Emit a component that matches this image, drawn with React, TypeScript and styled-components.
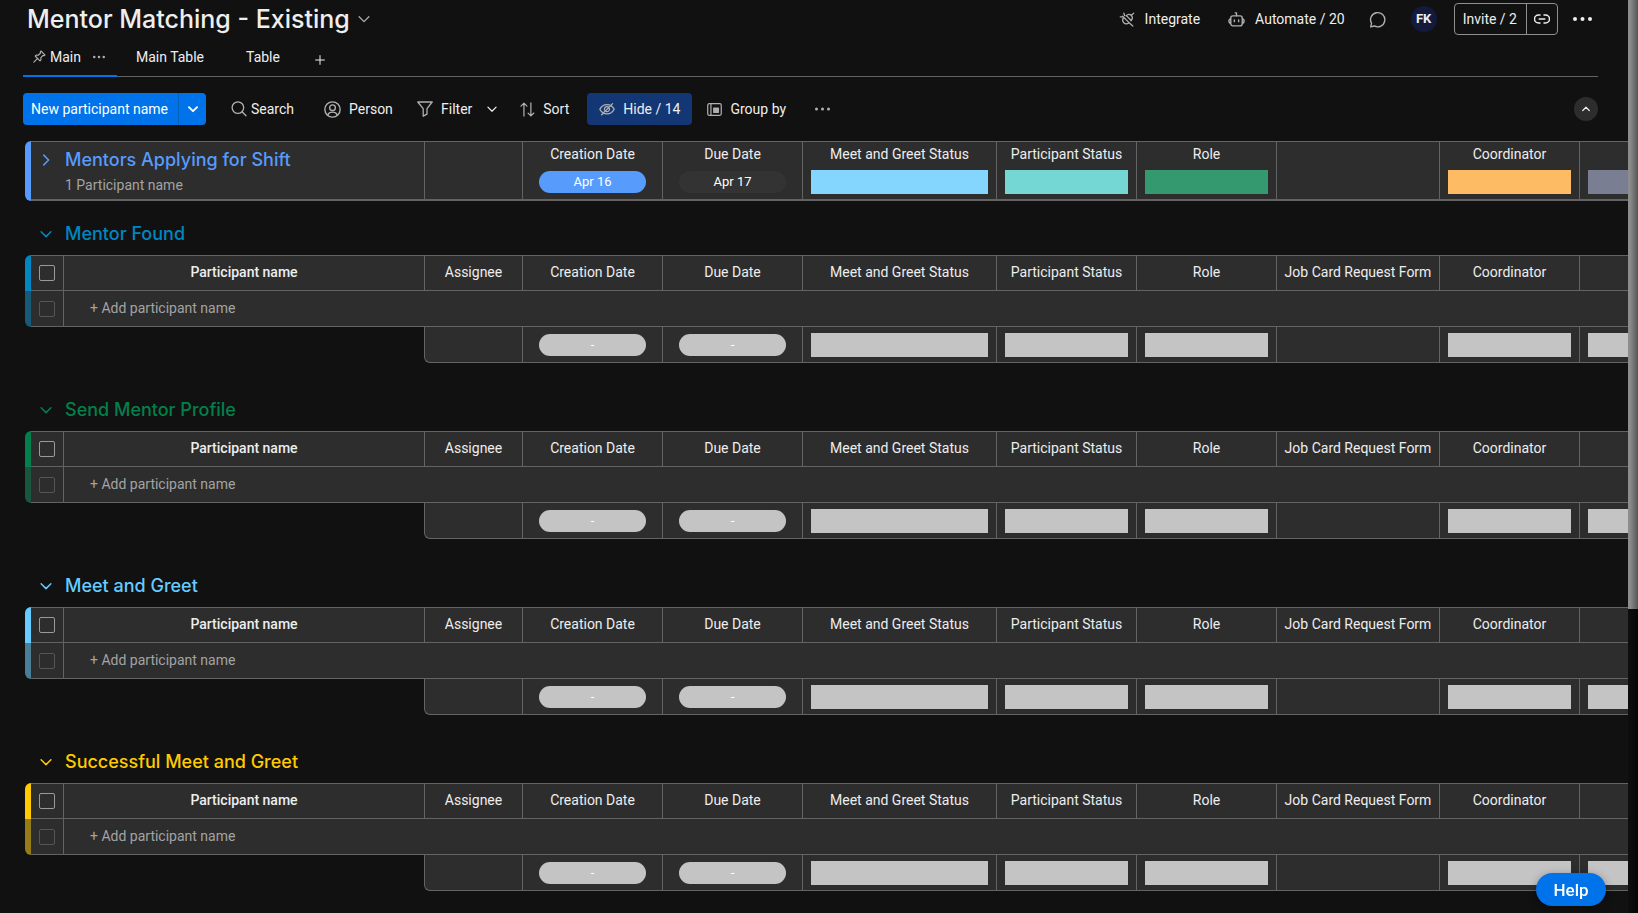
import React from 'react';
import styled, { createGlobalStyle } from 'styled-components';

const line = '#636363';
const surface = '#2d2d2d';
const textColor = '#eeeeee';
const muted = '#a3a3a3';
const iconColor = '#b0b0b0';
const blue = '#0073ea';
const headingFont = 'Inter, "Liberation Sans", sans-serif';

const GlobalStyle = createGlobalStyle`
  *, *::before, *::after { box-sizing: border-box; }
  body {
    margin: 0;
    background: #111111;
    color: ${textColor};
    font: 400 14px/20px Roboto, "Liberation Sans", sans-serif;
  }
  button {
    font: inherit;
    color: inherit;
    background: none;
    border: 0;
    padding: 0;
    cursor: pointer;
  }
  svg { display: block; flex: none; }
`;

/* ---------- shell ---------- */

const Shell = styled.div`
  display: flex;
  height: 100vh;
  overflow: hidden;
`;

const Board = styled.main`
  flex: 1;
  min-width: 0;
  overflow: hidden;
`;

const ScrollTrack = styled.div`
  flex: none;
  width: 10px;
  background: linear-gradient(90deg, #0e0e0e, #060606);
`;

const ScrollThumb = styled.div`
  height: 66.7%;
  background: linear-gradient(90deg, #8c8c8c 20%, #565656);
`;

/* ---------- header ---------- */

const Header = styled.header`
  display: flex;
  align-items: center;
  justify-content: space-between;
  height: 38px;
  padding: 0 30px 0 27px;
`;

const TitleButton = styled.button`
  display: flex;
  align-items: center;
  gap: 8px;
`;

const Title = styled.h1`
  margin: 0;
  font: 500 25px/32px ${headingFont};
`;

const Actions = styled.div`
  display: flex;
  align-items: center;
`;

const HeaderAction = styled.button<{ $after: number }>`
  display: flex;
  align-items: center;
  gap: 10px;
  margin-right: ${(p) => p.$after}px;
`;

const Avatar = styled.button`
  width: 26px;
  height: 26px;
  margin-right: 17px;
  border-radius: 50%;
  background: #141a3c;
  font-size: 13px;
  font-weight: 700;
`;

const InviteGroup = styled.div`
  display: flex;
  height: 32px;
  margin-right: 8px;
  border: 1px solid #8f8f8f;
  border-radius: 4px;
`;

const InviteButton = styled.button`
  padding: 0 9px 0 8px;
`;

const LinkButton = styled.button`
  padding: 0 7px;
  border-left: 1px solid #8f8f8f;
`;

const MoreButton = styled.button`
  display: grid;
  place-items: center;
  width: 32px;
  height: 32px;
`;

/* ---------- tabs ---------- */

const Tabs = styled.nav`
  display: flex;
  height: 39px;
  margin: 0 30px 0 23px;
  border-bottom: 1px solid ${line};
`;

const Tab = styled.button<{ $active?: boolean }>`
  display: flex;
  align-items: center;
  margin-bottom: -1px;
  padding: 0 ${(p) => (p.$active ? '12px 0 10px' : '23px 0 19px')};
  border-bottom: 2px solid ${(p) => (p.$active ? blue : 'transparent')};
`;

const TabLabel = styled.span`
  margin: 0 12px 0 4px;
`;

const AddTab = styled.button`
  display: grid;
  place-items: center;
  width: 34px;
  padding-top: 5px;
`;

/* ---------- toolbar ---------- */

const Toolbar = styled.div`
  display: flex;
  align-items: center;
  height: 64px;
  padding: 0 30px 0 23px;
`;

const NewItem = styled.div`
  display: flex;
  height: 32px;
  margin-right: 13px;
  border-radius: 4px;
  background: ${blue};
  color: #ffffff;
`;

const NewItemButton = styled.button`
  padding: 0 10px 0 8px;
  font-size: 14px;
`;

const NewItemMenu = styled.button`
  display: grid;
  place-items: center;
  width: 28px;
  border-left: 1px solid #0060b9;
`;

const ToolButton = styled.button<{ $width: number; $active?: boolean; $tight?: boolean }>`
  display: flex;
  align-items: center;
  gap: ${(p) => (p.$tight ? 4 : 8)}px;
  min-width: ${(p) => p.$width}px;
  height: 32px;
  padding: 0 12px;
  margin-right: ${(p) => (p.$active ? 3 : 0)}px;
  border-radius: 4px;
  background: ${(p) => (p.$active ? '#133774' : 'transparent')};
`;

const FilterMenu = styled.button`
  display: grid;
  place-items: center;
  width: 16px;
  height: 32px;
  margin-right: 8px;
`;

const CollapseButton = styled.button`
  display: grid;
  place-items: center;
  width: 24px;
  height: 24px;
  margin-left: auto;
  border-radius: 50%;
  background: ${surface};
`;

/* ---------- groups ---------- */

const Groups = styled.div`
  padding-left: 25px;
  overflow: hidden;
`;

const Group = styled.section`
  margin-bottom: 14px;
`;

const GroupHeading = styled.h2<{ $color: string }>`
  height: 54px;
  margin: 0;
  padding-top: 21px;
  color: ${(p) => p.$color};
  font: 500 18px/24px ${headingFont};
`;

const GroupToggle = styled.button<{ $inset?: boolean }>`
  display: flex;
  align-items: center;
  gap: 13px;
  padding-left: ${(p) => (p.$inset ? 9 : 15)}px;
`;

const GroupTable = styled.table`
  width: 100%;
  min-width: 1694px;
  table-layout: fixed;
  border-spacing: 0;
`;

const Cell = styled.td<{ $first?: boolean }>`
  height: 36px;
  padding: 0;
  background: ${surface};
  border-bottom: 1px solid ${line};
  border-left: ${(p) => (p.$first ? 0 : 1)}px solid ${line};
`;

const HeadCell = styled(Cell).attrs({ as: 'th', scope: 'col' })`
  padding: 0 4px 2px;
  border-top: 1px solid ${line};
  font-weight: 400;
  white-space: nowrap;
  overflow: hidden;
`;

const ItemHead = styled(HeadCell)`
  font-weight: 500;
`;

const CheckCell = styled(Cell)<{ $top?: boolean }>`
  border-top: ${(p) => (p.$top ? 1 : 0)}px solid ${line};
  padding-left: 8px;
`;

const Bar = styled.td<{ $color: string; $edge: 'top' | 'bottom' | 'both' }>`
  padding: 0;
  background: ${(p) => (p.$edge === 'bottom' ? `color-mix(in srgb, ${p.$color} 50%, ${surface})` : p.$color)};
  border-top-left-radius: ${(p) => (p.$edge === 'bottom' ? 0 : 6)}px;
  border-bottom-left-radius: ${(p) => (p.$edge === 'top' ? 0 : 6)}px;
`;

const Check = styled.input.attrs({ type: 'checkbox' })`
  appearance: none;
  display: block;
  width: 16px;
  height: 16px;
  margin: 0;
  border: 1px solid #9a9a9a;
  border-radius: 2px;

  &:disabled { border-color: #555555; }
`;

const AddItem = styled.input`
  display: block;
  width: 320px;
  height: 28px;
  margin-left: 22px;
  padding: 0 4px 2px;
  border: 0;
  background: transparent;
  color: ${textColor};
  font: inherit;

  &::placeholder { color: ${muted}; opacity: 1; }
`;

const Blank = styled.td`
  padding: 0;
`;

const SummaryCell = styled(Cell)<{ $corner?: boolean }>`
  padding: 1px 0 0;
  border-bottom-left-radius: ${(p) => (p.$corner ? 6 : 0)}px;
`;

const Slot = styled.div<{ $pad: number }>`
  display: flex;
  align-items: center;
  height: 24px;
  padding: 0 ${(p) => p.$pad}px;
`;

const Pill = styled.span<{ $color: string }>`
  flex: 1;
  height: 22px;
  border-radius: 11px;
  background: ${(p) => p.$color};
  color: #ffffff;
  font-size: 13px;
  line-height: 21px;
  text-align: center;
`;

const Battery = styled.span<{ $color: string }>`
  flex: 1;
  height: 24px;
  background: ${(p) => p.$color};
`;

const CollapsedCell = styled(Cell)`
  height: 60px;
  padding-top: 2px;
  border-top: 1px solid ${line};
  border-bottom: 2px solid ${line};
  vertical-align: top;
`;

const CollapsedTitle = styled.h2`
  margin: 4px 0 3px;
  color: #579bfc;
  font: 500 18px/24px ${headingFont};
`;

const CollapsedCount = styled.div`
  padding-left: 34px;
  color: ${muted};
`;

const ColumnLabel = styled.div`
  height: 20px;
  margin-bottom: 6px;
  text-align: center;
  white-space: nowrap;
`;

const HelpButton = styled.button`
  position: fixed;
  right: 32px;
  bottom: 7px;
  width: 70px;
  height: 33px;
  border-radius: 17px;
  background: ${blue};
  color: #ffffff;
  font-size: 17px;
  font-weight: 500;
  box-shadow: 0 2px 8px rgba(0, 0, 0, 0.35);
`;

/* ---------- icons ---------- */

type IconProps = { size?: number; color?: string; children: React.ReactNode; weight?: number };

const Icon = ({ size = 16, color = iconColor, weight = 1.3, children }: IconProps) => (
  <svg width={size} height={size} viewBox="0 0 16 16" fill="none" stroke={color}
    strokeWidth={weight} strokeLinecap="round" strokeLinejoin="round" aria-hidden="true">
    {children}
  </svg>
);

const Chevron = ({ size = 12, color = 'currentColor', weight = 1.6, dir = 'down' }:
  { size?: number; color?: string; weight?: number; dir?: 'down' | 'up' | 'right' }) => (
  <Icon size={size} color={color} weight={weight}>
    {dir === 'down' && <path d="M1.5 5 8 11.5 14.5 5" />}
    {dir === 'up' && <path d="M1.5 11 8 4.5 14.5 11" />}
    {dir === 'right' && <path d="M5 1.5 11.5 8 5 14.5" />}
  </Icon>
);

const Dots = ({ width = 16, r = 1.5, color = iconColor }) => (
  <svg width={width} height="6" viewBox={`0 0 ${width} 6`} fill={color} aria-hidden="true">
    <circle cx={r} cy="3" r={r} />
    <circle cx={width / 2} cy="3" r={r} />
    <circle cx={width - r} cy="3" r={r} />
  </svg>
);

const PinIcon = () => (
  <Icon size={13} weight={1.4}>
    <path d="M9.8 1.2 14.8 6.2 13.4 7 12 6.9 9.6 9.6 9.8 12.2 8.6 13.3 2.7 7.4 3.8 6.2 6.4 6.4 9.1 4 9 2.6ZM5.6 10.4 1 15" />
  </Icon>
);

const PlugIcon = () => (
  <Icon size={16} weight={1.3}>
    <path d="M3.6 5.200 11.300 12.900M4.600 6.600C3.200 8.500 3.400 10.300 4.800 11.700 6.200 13.100 8.200 13.100 10 11.700M1.300 5.900 4 5.600M4.900 2.200 5.600 4.600M7.100 4.800C8.900 3.100 10.900 3.100 12.300 4.500 13.700 5.900 13.700 7.900 12 9.700M7.300 4.600 12.200 9.500M12.300 4.500 14.700 2.100M10.400 12 13.800 15" />
  </Icon>
);

const RobotIcon = () => (
  <Icon size={17} weight={1.3}>
    <rect x="2.6" y="4.6" width="10.8" height="9.4" rx="2" />
    <path d="M8 4.4V1.8M6.8 1.8H8M2.4 7.4C.4 7.4.4 11.4 2.4 11.4M13.6 7.4C15.6 7.4 15.6 11.4 13.6 11.4M6 8.3V10M10 8.3V10" />
  </Icon>
);

const BubbleIcon = () => (
  <Icon size={17} weight={1.3}>
    <path d="M1.6 15 2.4 11.6A6.7 6.7 0 1 1 5 14.1Z" />
  </Icon>
);

const LinkIcon = () => (
  <Icon size={16} color={textColor} weight={1.5}>
    <path d="M6 4H4.5a4 4 0 0 0 0 8H6M10 4h1.5a4 4 0 0 1 0 8H10M5.2 8H10.8" />
  </Icon>
);

const SearchIcon = () => (
  <Icon size={16}>
    <circle cx="6.9" cy="6.6" r="5.8" />
    <path d="M11.1 10.8 15 14.8" />
  </Icon>
);

const PersonIcon = () => (
  <Icon size={17}>
    <circle cx="8" cy="8" r="7.2" />
    <circle cx="8" cy="6.3" r="2.7" />
    <path d="M3.6 13.2C4.3 11.3 5.8 10.5 8 10.5S11.7 11.3 12.4 13.2" />
  </Icon>
);

const FilterIcon = () => (
  <Icon size={16}>
    <path d="M.8 1H15.2L10 7.7V13.2L6.2 15.2V7.7Z" />
  </Icon>
);

const SortIcon = () => (
  <Icon size={15}>
    <path d="M4.2 15V1.2M1 4.4 4.2 1.2 7.4 4.4M11.6 1V14.8M8.6 11.8 11.6 14.8 14.8 11.8" />
  </Icon>
);

const HideIcon = () => (
  <Icon size={16}>
    <path d="M.8 8.3C2.4 5.3 5 3.6 8 3.6S13.6 5.3 15.2 8.3C13.6 11.2 11 12.9 8 12.9S2.4 11.2.8 8.3ZM2.6 13.8 13.6 2.6M6 9.8A2.5 2.5 0 0 1 9 5.9M10.3 7.3A2.5 2.5 0 0 1 7.3 10.6" />
  </Icon>
);

const GroupByIcon = () => (
  <Icon size={15}>
    <rect x=".8" y="1.8" width="14.4" height="12.4" rx="1.6" />
    <path d="M4.2 2V14" />
    <rect x="7.2" y="6.4" width="5" height="4.6" fill={iconColor} />
  </Icon>
);

const PlusIcon = () => (
  <Icon size={10} color={textColor} weight={1.6}>
    <path d="M8 1V15M1 8H15" />
  </Icon>
);

/* ---------- data ---------- */

type Column = { name: string; width?: number; kind: 'none' | 'date' | 'status'; color?: string; value?: string; hideLabel?: boolean };

const columns: Column[] = [
  { name: 'Assignee', width: 98, kind: 'none', hideLabel: true },
  { name: 'Creation Date', width: 140, kind: 'date', color: '#579bfc', value: 'Apr 16' },
  { name: 'Due Date', width: 140, kind: 'date', color: '#333333', value: 'Apr 17' },
  { name: 'Meet and Greet Status', width: 194, kind: 'status', color: '#85d6ff' },
  { name: 'Participant Status', width: 140, kind: 'status', color: '#74d7d3' },
  { name: 'Role', width: 140, kind: 'status', color: '#359970' },
  { name: 'Job Card Request Form', width: 163, kind: 'none', hideLabel: true },
  { name: 'Coordinator', width: 140, kind: 'status', color: '#fdbc64' },
  { name: '', kind: 'status', color: '#797e93' },
];

const groups = [
  { name: 'Mentor Found', color: '#0086c0' },
  { name: 'Send Mentor Profile', color: '#037f4c' },
  { name: 'Meet and Greet', color: '#66ccff' },
  { name: 'Successful Meet and Greet', color: '#ffcb00' },
];

const ColumnWidths = () => (
  <colgroup>
    <col width={6} />
    <col width={32} />
    <col width={361} />
    {columns.map((c, i) => <col key={i} width={c.width} />)}
  </colgroup>
);

const Summary = ({ column, empty }: { column: Column; empty?: boolean }) => {
  if (column.kind === 'none') return null;
  const color = empty ? '#c4c4c4' : column.color!;
  return column.kind === 'date' ? (
    <Slot $pad={16}><Pill $color={color}>{empty ? '-' : column.value}</Pill></Slot>
  ) : (
    <Slot $pad={8}><Battery $color={color} /></Slot>
  );
};

const CollapsedGroup = () => (
  <GroupTable>
    <ColumnWidths />
    <tbody>
      <tr>
        <Bar $color="#579bfc" $edge="both" />
        <CollapsedCell $first colSpan={2}>
          <CollapsedTitle>
            <GroupToggle $inset aria-expanded="false"><Chevron dir="right" weight={2} />Mentors Applying for Shift</GroupToggle>
          </CollapsedTitle>
          <CollapsedCount>1 Participant name</CollapsedCount>
        </CollapsedCell>
        {columns.map((c, i) => (
          <CollapsedCell key={i}>
            <ColumnLabel>{c.hideLabel ? '' : c.name}</ColumnLabel>
            <Summary column={c} />
          </CollapsedCell>
        ))}
      </tr>
    </tbody>
  </GroupTable>
);

const OpenGroup = ({ name, color }: { name: string; color: string }) => (
  <Group>
    <GroupHeading $color={color}>
      <GroupToggle aria-expanded="true"><Chevron weight={2} />{name}</GroupToggle>
    </GroupHeading>
    <GroupTable>
      <ColumnWidths />
      <thead>
        <tr>
          <Bar $color={color} $edge="top" />
          <CheckCell $first $top><Check aria-label={`Select all in ${name}`} /></CheckCell>
          <ItemHead>Participant name</ItemHead>
          {columns.map((c, i) => <HeadCell key={i}>{c.name}</HeadCell>)}
        </tr>
      </thead>
      <tbody>
        <tr>
          <Bar $color={color} $edge="bottom" />
          <CheckCell $first><Check disabled aria-label="Select new item" /></CheckCell>
          <Cell colSpan={columns.length + 1}>
            <AddItem placeholder="+ Add participant name" aria-label={`Add participant name to ${name}`} />
          </Cell>
        </tr>
      </tbody>
      <tfoot>
        <tr>
          <Blank colSpan={3} />
          {columns.map((c, i) => (
            <SummaryCell key={i} $corner={i === 0}><Summary column={c} empty /></SummaryCell>
          ))}
        </tr>
      </tfoot>
    </GroupTable>
  </Group>
);

export default function App() {
  return (
    <Shell>
      <GlobalStyle />
      <Board>
        <Header>
          <TitleButton>
            <Title>Mentor Matching - Existing</Title>
            <Chevron color={iconColor} />
          </TitleButton>
          <Actions>
            <HeaderAction $after={28}><PlugIcon />Integrate</HeaderAction>
            <HeaderAction $after={24}><RobotIcon />Automate / 20</HeaderAction>
            <HeaderAction $after={25} aria-label="Discussion"><BubbleIcon /></HeaderAction>
            <Avatar>FK</Avatar>
            <InviteGroup>
              <InviteButton>Invite / 2</InviteButton>
              <LinkButton aria-label="Copy link"><LinkIcon /></LinkButton>
            </InviteGroup>
            <MoreButton aria-label="More options"><Dots width={19} r={2} color={textColor} /></MoreButton>
          </Actions>
        </Header>
        <Tabs>
          <Tab $active><PinIcon /><TabLabel>Main</TabLabel><Dots width={12} r={1.25} /></Tab>
          <Tab>Main Table</Tab>
          <Tab>Table</Tab>
          <AddTab aria-label="Add view"><PlusIcon /></AddTab>
        </Tabs>
        <Toolbar>
          <NewItem>
            <NewItemButton>New participant name</NewItemButton>
            <NewItemMenu aria-label="More ways to add"><Chevron size={10} weight={3} /></NewItemMenu>
          </NewItem>
          <ToolButton $width={93} $tight><SearchIcon />Search</ToolButton>
          <ToolButton $width={93}><PersonIcon />Person</ToolButton>
          <ToolButton $width={75}><FilterIcon />Filter</ToolButton>
          <FilterMenu aria-label="Saved filters"><Chevron size={10} weight={2} /></FilterMenu>
          <ToolButton $width={79}><SortIcon />Sort</ToolButton>
          <ToolButton $width={105} $active><HideIcon />Hide / 14</ToolButton>
          <ToolButton $width={108}><GroupByIcon />Group by</ToolButton>
          <ToolButton $width={39} aria-label="More tools"><Dots width={15} /></ToolButton>
          <CollapseButton aria-label="Collapse header"><Chevron size={8} dir="up" weight={2.4} /></CollapseButton>
        </Toolbar>
        <Groups>
          <CollapsedGroup />
          {groups.map((g) => <OpenGroup key={g.name} {...g} />)}
        </Groups>
      </Board>
      <ScrollTrack><ScrollThumb /></ScrollTrack>
      <HelpButton>Help</HelpButton>
    </Shell>
  );
}
